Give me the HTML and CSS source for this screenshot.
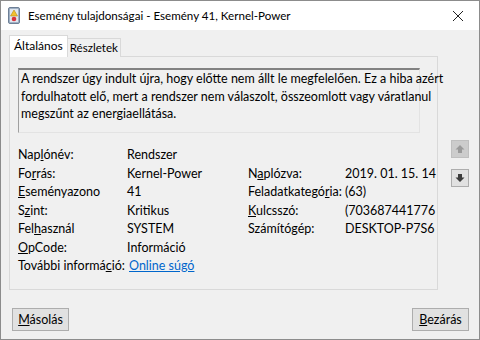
FILE: index.html
```html
<!DOCTYPE html>
<html>
<head>
    <title>Esemény tulajdonságai</title>
    <meta charset="UTF-8">
    <link rel="stylesheet" href="styles.css">
</head>
<body>
<div class="window">
    <div class="titlebar">
        <svg class="app-icon" width="12" height="17" viewBox="0 0 12 17">
            <rect x="0.5" y="0.5" width="11" height="16" rx="1.5" fill="#9fb0c4" stroke="#6d7f96"/>
            <rect x="2" y="2" width="8" height="13" fill="#dfe6ef"/>
            <polygon points="6,3 9.5,9 2.5,9" fill="#f2c12e" stroke="#b88a10" stroke-width="0.6"/>
            <circle cx="6" cy="12" r="2.3" fill="#d8323a"/>
        </svg>
        <span class="title">Esemény tulajdonságai - Esemény 41, Kernel-Power</span>
        <svg class="close" width="12" height="12" viewBox="0 0 12 12">
            <path d="M1 1 L11 11 M11 1 L1 11" stroke="#222" stroke-width="1"/>
        </svg>
    </div>

    <div class="body">
        <div class="main">
            <div class="tabs-area">
                <div class="tabs">
                    <div class="tab active">Általános</div>
                    <div class="tab">Részletek</div>
                </div>
                <div class="panel">
                    <div class="desc">A rendszer úgy indult újra, hogy előtte nem állt le megfelelően. Ez a hiba azért<br>fordulhatott elő, mert a rendszer nem válaszolt, összeomlott vagy váratlanul<br>megszűnt az energiaellátása.</div>

                    <div class="fields">
                        <div class="lbl">Nap<u>l</u>ónév:</div><div class="val">Rendszer</div><div></div><div></div>
                        <div class="lbl">Fo<u>r</u>rás:</div><div class="val">Kernel-Power</div><div class="lbl">N<u>a</u>plózva:</div><div class="val">2019. 01. 15. 14</div>
                        <div class="lbl"><u>E</u>seményazono</div><div class="val">41</div><div class="lbl">Feladatkategó<u>r</u>ia:</div><div class="val">(63)</div>
                        <div class="lbl">S<u>z</u>int:</div><div class="val">Kritikus</div><div class="lbl"><u>K</u>ulcsszó:</div><div class="val">(703687441776</div>
                        <div class="lbl">Fel<u>h</u>asznál</div><div class="val">SYSTEM</div><div class="lbl">Számító<u>g</u>ép:</div><div class="val">DESKTOP-P7S6</div>
                        <div class="lbl"><u>O</u>pCode:</div><div class="val">Információ</div><div></div><div></div>
                        <div class="lbl">További informá<u>c</u>ió:</div><div class="val link"><a href="#">Online súgó</a></div><div></div><div></div>
                    </div>
                </div>
            </div>
            <div class="nav">
                <div class="nav-btn disabled">
                    <svg width="10" height="10" viewBox="0 0 10 10"><polygon points="5,1 9.5,5.5 7,5.5 7,9 3,9 3,5.5 0.5,5.5" fill="#9a9a9a"/></svg>
                </div>
                <div class="nav-btn">
                    <svg width="10" height="10" viewBox="0 0 10 10"><polygon points="5,9 9.5,4.5 7,4.5 7,1 3,1 3,4.5 0.5,4.5" fill="#3c3c3c"/></svg>
                </div>
            </div>
        </div>

        <div class="footer">
            <button><u>M</u>ásolás</button>
            <button><u>B</u>ezárás</button>
        </div>
    </div>
</div>
</body>
</html>
```

FILE: styles.css
```css
body { margin: 0; font-family: "Segoe UI", Lato, "Liberation Sans", sans-serif; font-size: 12px; color: #000; }
.window { width: 480px; height: 340px; box-sizing: border-box; border: 1px solid #8c8c8c; background: #f0f0f0; display: flex; flex-direction: column; }

.titlebar { height: 29px; background: #fff; display: flex; align-items: center; padding: 0 0 0 7px; }
.app-icon { margin-right: 8px; }
.title { flex: 1; font-size: 11.6px; }
.close { margin-right: 15px; }

.body { flex: 1; display: flex; flex-direction: column; padding: 6px 0 0 7px; }
.main { display: flex; }
.tabs-area { width: 429px; margin-left: 1px; }
.tabs { display: flex; align-items: flex-end; height: 21px; position: relative; z-index: 1; }
.tab { border: 1px solid #d9d9d9; border-bottom: none; padding: 0 2px; height: 18px; line-height: 17px; background: #f0f0f0; font-size: 11.6px; }
.tab + .tab { border-left: none; }
.tab.active { height: 21px; line-height: 20px; background: #fff; border-color: #d9d9d9; padding: 0 4px 0 4px; font-size: 12px; }
.panel { height: 234px; box-sizing: border-box; border: 1px solid #d9d9d9; background: #f0f0f0; margin-top: -1px; padding: 11px 9px 0 8px; }

.desc { height: 65px; box-sizing: border-box; width: 402px; border-style: solid; border-width: 2px 1px 1px 1px; border-color: #828282 #e3e3e3 #e3e3e3 #a0a0a0; padding: 0 2px; line-height: 17.5px; font-size: 12.5px; white-space: nowrap; }

.fields { display: grid; grid-template-columns: 109px 121px 97px 78px; grid-auto-rows: 18.5px; margin-top: 13px; line-height: 18.5px; font-size: 12.5px; }
.fields div { white-space: nowrap; }
.fields .link { padding-left: 2px; }
a { color: #0066cc; }

.nav { display: flex; flex-direction: column; gap: 11px; margin: 104px 0 0 13px; }
.nav-btn { width: 16px; height: 16px; border: 1px solid #adadad; background: #e1e1e1; display: flex; align-items: center; justify-content: center; }
.nav-btn.disabled { background: #cccccc; border-color: #bfbfbf; }

.footer { display: flex; justify-content: space-between; margin-top: 18px; padding: 0 10px 0 4px; }
button { font: inherit; font-size: 12.5px; height: 23px; padding: 0 5px; background: #e1e1e1; border: 1px solid #adadad; min-width: 57px; }
```
